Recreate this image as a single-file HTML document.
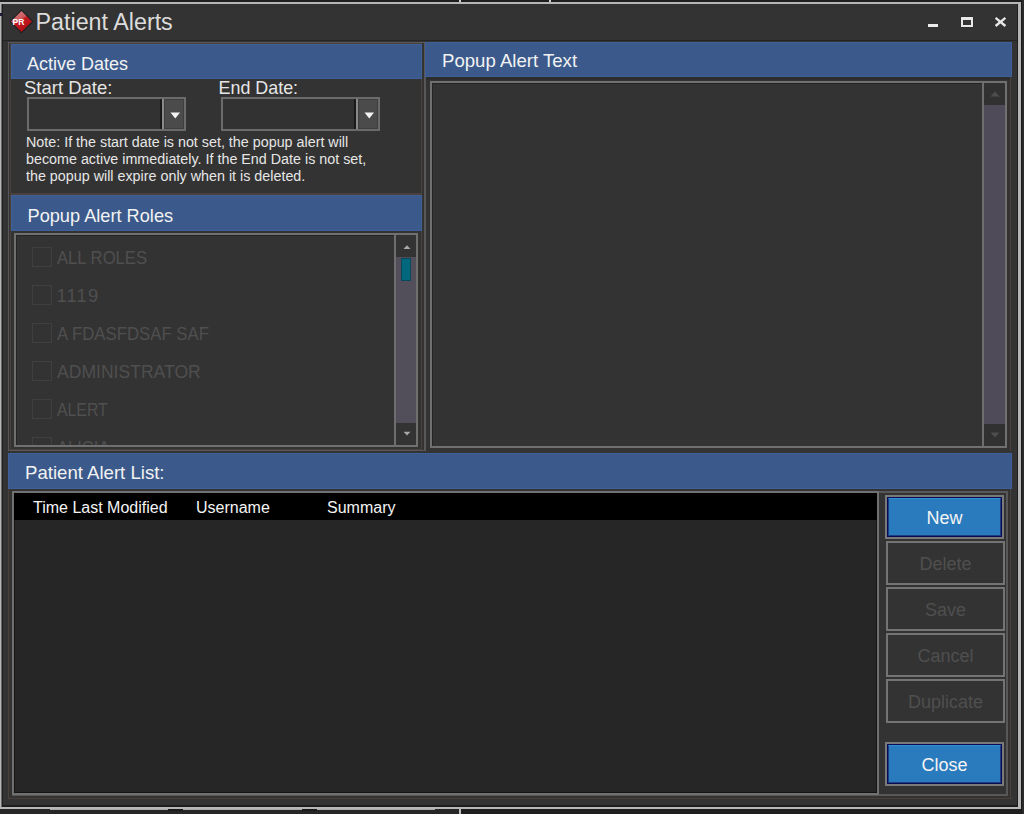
<!DOCTYPE html>
<html><head><meta charset="utf-8">
<style>
*{margin:0;padding:0;box-sizing:border-box}
html,body{width:1024px;height:814px;overflow:hidden;background:#262626;font-family:"Liberation Sans",sans-serif}
.a{position:absolute}
.t{position:absolute;white-space:nowrap;line-height:1}
.band{position:absolute;background:#3b5a8b;box-shadow:inset 0 0 0 1px #3f5f98}
.gl{position:absolute;background:#585858}
.br{position:absolute;background:#4a403c}
.lb{position:absolute;border:2px solid #707070;box-shadow:inset 1px 1px 0 0 #242424}
.btn{position:absolute;border:2px solid #747474;background:#333}
.btn .t{color:#4f4f4f;font-size:18px}
.bb{position:absolute;border:2px solid #7a7a7a;background:#0b0b55}
.bb .in{position:absolute;left:1px;top:1px;right:1px;bottom:1px;background:#2a7bbd;border:1px solid #1a3f80;border-top-color:#2f8fd0}
.bb .t{color:#f4f4f4;font-size:18px}
</style></head><body>
<!-- background details -->
<div class="a" style="left:0;top:0;width:1024px;height:2px;background:#1f1f1f"></div>
<div class="a" style="left:459px;top:0;width:1.5px;height:3px;background:#cfcfcf"></div>
<div class="a" style="left:549px;top:0;width:1.5px;height:3px;background:#cfcfcf"></div>
<div class="a" style="left:1020.5px;top:0;width:1.5px;height:814px;background:#1a1a1a"></div>
<div class="a" style="left:1022px;top:0;width:2px;height:814px;background:#2b2b2b"></div>
<div class="a" style="left:460px;top:809px;width:561px;height:5px;background:#1e1e1e"></div>
<div class="a" style="left:459px;top:808px;width:1.5px;height:6px;background:#bdbdbd"></div>
<!-- window -->
<div class="a" style="left:0;top:2px;width:1020.5px;height:807px;background:#b6b6b6"></div>
<div class="a" style="left:1px;top:4px;width:1px;height:803px;background:#6a6a6a"></div>
<div class="a" style="left:2px;top:4px;width:1016px;height:803px;background:#1e1e1e"></div>
<div class="a" style="left:3px;top:4px;width:1014px;height:801px;background:#333"></div>
<!-- title bar bottom line -->
<div class="a" style="left:3px;top:40px;width:1014px;height:1px;background:#242424"></div>

<!-- icon -->
<svg class="a" style="left:8px;top:8px" width="28" height="28" viewBox="0 0 28 28">
  <defs><linearGradient id="rg" x1="0.2" y1="0" x2="0.8" y2="1"><stop offset="0" stop-color="#d98080"/><stop offset="0.38" stop-color="#cc5a5e"/><stop offset="0.46" stop-color="#c2181e"/><stop offset="1" stop-color="#a80c14"/></linearGradient></defs>
  <path d="M13.5 1.5 L25.5 13.5 L13.5 25.5 L1.5 13.5 Z" fill="#1f1f1f"/>
  <path d="M13.5 3 L24 13.5 L13.5 24 L3 13.5 Z" fill="url(#rg)"/>
  <text x="10.5" y="17" font-family="Liberation Sans" font-weight="bold" font-size="8.5" fill="#fff" text-anchor="middle">PR</text>
</svg>
<div class="t" style="left:35.5px;top:11px;font-size:23.3px;color:#dcdcdc">Patient Alerts</div>

<!-- controls -->
<div class="a" style="left:928px;top:24px;width:10px;height:3px;background:#ececec"></div>
<div class="a" style="left:960.5px;top:17px;width:12.5px;height:10px;border:2px solid #e8e8e8;border-top-width:3.5px;box-shadow:0 0 1px #151515"></div>
<svg class="a" style="left:993px;top:16px" width="14" height="12" viewBox="0 0 14 12"><path d="M2.6 1.8 L12.4 10 M12.4 1.8 L2.6 10" stroke="#e8e8e8" stroke-width="2.3"/></svg>

<!-- LEFT COLUMN -->
<div class="gl" style="left:8px;top:42px;width:418px;height:409px"></div>
<div class="a" style="left:9px;top:43px;width:415px;height:407px;background:#333"></div>
<!-- Active Dates group -->
<div class="br" style="left:10px;top:43px;width:412px;height:151px"></div>
<div class="a" style="left:11px;top:44px;width:410px;height:149px;background:#333"></div>
<div class="band" style="left:11px;top:44px;width:411px;height:35px"></div>
<div class="t" style="left:27px;top:54.5px;font-size:18px;color:#f2f2f2">Active Dates</div>
<div class="t" style="left:24px;top:79px;font-size:18.5px;color:#e6e6e6">Start Date:</div>
<div class="t" style="left:218.5px;top:79.5px;font-size:17.9px;color:#e6e6e6">End Date:</div>
<!-- combo 1 -->
<div class="a" style="left:27px;top:97px;width:159px;height:34px;background:#6b6b6b"></div>
<div class="a" style="left:29px;top:99px;width:132px;height:30px;background:#323232"></div>
<div class="a" style="left:160px;top:99px;width:1.5px;height:30px;background:#1a1a1a"></div>
<div class="a" style="left:161.5px;top:99px;width:2px;height:30px;background:#8a8a8a"></div>
<div class="a" style="left:163.5px;top:99px;width:20.5px;height:30px;background:#4b4b4b;border:1px solid #3e3e3e"></div>
<svg class="a" style="left:169.5px;top:111.5px" width="11" height="7"><path d="M0.5 0.5 L10 0.5 L5.25 6.5 Z" fill="#f4f4f4"/></svg>
<!-- combo 2 -->
<div class="a" style="left:221px;top:97px;width:159px;height:34px;background:#6b6b6b"></div>
<div class="a" style="left:223px;top:99px;width:132px;height:30px;background:#323232"></div>
<div class="a" style="left:354px;top:99px;width:1.5px;height:30px;background:#1a1a1a"></div>
<div class="a" style="left:355.5px;top:99px;width:2px;height:30px;background:#8a8a8a"></div>
<div class="a" style="left:357.5px;top:99px;width:20.5px;height:30px;background:#4b4b4b;border:1px solid #3e3e3e"></div>
<svg class="a" style="left:363.5px;top:111.5px" width="11" height="7"><path d="M0.5 0.5 L10 0.5 L5.25 6.5 Z" fill="#f4f4f4"/></svg>
<div class="t" style="left:26px;top:132.5px;font-size:15.4px;line-height:17.1px;color:#e6e6e6;transform:scaleX(0.93);transform-origin:0 0">Note: If the start date is not set, the popup alert will<br>become active immediately. If the End Date is not set,<br>the popup will expire only when it is deleted.</div>

<!-- Popup Alert Roles group -->
<div class="br" style="left:10px;top:194px;width:412px;height:256px"></div>
<div class="a" style="left:11px;top:195px;width:410px;height:254px;background:#333"></div>
<div class="band" style="left:11px;top:195px;width:411px;height:36px"></div>
<div class="t" style="left:27.5px;top:206.5px;font-size:18.2px;color:#f2f2f2">Popup Alert Roles</div>
<div class="lb" style="left:14px;top:233px;width:404px;height:214px;background:#333"></div>
<div class="a" style="left:16px;top:235px;width:378px;height:210px;overflow:hidden"><div class="a" style="left:16px;top:12px;width:20px;height:20px;border:1px solid #3f3f3f"></div><div class="t" style="left:40.5px;top:14px;font-size:18.4px;color:#4f4f4f;transform-origin:0 0;transform:scaleX(0.905)">ALL ROLES</div><div class="a" style="left:16px;top:50px;width:20px;height:20px;border:1px solid #3f3f3f"></div><div class="t" style="left:40.5px;top:52px;font-size:18.4px;color:#4f4f4f;transform-origin:0 0;letter-spacing:1.2px">1119</div><div class="a" style="left:16px;top:88px;width:20px;height:20px;border:1px solid #3f3f3f"></div><div class="t" style="left:40.5px;top:90px;font-size:18.4px;color:#4f4f4f;transform-origin:0 0;transform:scaleX(0.912)">A FDASFDSAF SAF</div><div class="a" style="left:16px;top:126px;width:20px;height:20px;border:1px solid #3f3f3f"></div><div class="t" style="left:40.5px;top:128px;font-size:18.4px;color:#4f4f4f;transform-origin:0 0;transform:scaleX(0.955)">ADMINISTRATOR</div><div class="a" style="left:16px;top:164px;width:20px;height:20px;border:1px solid #3f3f3f"></div><div class="t" style="left:40.5px;top:166px;font-size:18.4px;color:#4f4f4f;transform-origin:0 0;transform:scaleX(0.86)">ALERT</div><div class="a" style="left:16px;top:202px;width:20px;height:20px;border:1px solid #3f3f3f"></div><div class="t" style="left:40.5px;top:204px;font-size:18.4px;color:#4f4f4f;transform-origin:0 0;transform:scaleX(0.9)">ALICIA</div></div><div class="a" style="left:394px;top:235px;width:2px;height:210px;background:#6e6e6e"></div><div class="a" style="left:396px;top:235px;width:20px;height:22px;background:#333"></div><svg class="a" style="left:401.5px;top:244px" width="10" height="6"><path d="M1.5 5 L8.5 5 L5 1.2 Z" fill="#a8a8a8"/></svg><div class="a" style="left:396px;top:257px;width:20px;height:166px;background:#524e5a"></div><div class="a" style="left:401px;top:257.5px;width:10px;height:23px;background:#00677d;border:1px solid #08485a"></div><div class="a" style="left:396px;top:423px;width:20px;height:22px;background:#333"></div><svg class="a" style="left:401.5px;top:431px" width="10" height="6"><path d="M1.5 0.8 L8.5 0.8 L5 4.6 Z" fill="#a8a8a8"/></svg>

<!-- RIGHT PANEL -->
<div class="gl" style="left:423.5px;top:42px;width:2.5px;height:409px"></div>
<div class="band" style="left:425px;top:42px;width:587px;height:35px"></div>
<div class="t" style="left:442px;top:52px;font-size:18.6px;color:#f2f2f2">Popup Alert Text</div>
<div class="a" style="left:426px;top:77px;width:584px;height:3px;background:#2d2d2d"></div>
<div class="br" style="left:1010px;top:77px;width:1px;height:374px"></div>
<div class="lb" style="left:430px;top:81px;width:577px;height:367px;background:#333"></div>

<div class="a" style="left:982px;top:83px;width:2px;height:363px;background:#6e6e6e"></div><div class="a" style="left:984px;top:83px;width:21px;height:22px;background:#313131"></div><svg class="a" style="left:990px;top:91px" width="10" height="6"><path d="M0.5 5.5 L9.5 5.5 L5 0.5 Z" fill="#4e4e4e"/></svg><div class="a" style="left:984px;top:105px;width:21px;height:319px;background:#4f4b58"></div><div class="a" style="left:984px;top:424px;width:21px;height:22px;background:#313131"></div><svg class="a" style="left:990px;top:432px" width="10" height="6"><path d="M0.5 0.5 L9.5 0.5 L5 5.5 Z" fill="#4e4e4e"/></svg>
<!-- BOTTOM PANEL -->
<div class="band" style="left:8px;top:453px;width:1004px;height:36px"></div>
<div class="t" style="left:25px;top:464px;font-size:18.6px;color:#f2f2f2">Patient Alert List:</div>
<div class="br" style="left:8px;top:798px;width:1004px;height:1px"></div>
<div class="br" style="left:1010px;top:489px;width:1px;height:310px"></div>
<div class="gl" style="left:1006px;top:491px;width:2px;height:305px"></div>
<div class="gl" style="left:12px;top:794px;width:996px;height:1.5px"></div>
<div class="br" style="left:8px;top:489px;width:1px;height:310px"></div>
<div class="gl" style="left:879px;top:491px;width:129px;height:1.5px"></div>
<div class="lb" style="left:12px;top:491px;width:867px;height:304px;background:#262626;box-shadow:inset 0 0 0 1px #141414"></div>
<div class="a" style="left:14px;top:493px;width:863px;height:27px;background:#000"></div>
<div class="t" style="left:33px;top:500px;font-size:16px;color:#f4f4f4">Time Last Modified</div>
<div class="t" style="left:196px;top:500px;font-size:16px;color:#f4f4f4">Username</div>
<div class="t" style="left:327px;top:500px;font-size:16px;color:#f4f4f4">Summary</div>

<div class="bb" style="left:885px;top:495px;width:119px;height:44px"><div class="in"></div><div class="t" style="left:0;width:115px;text-align:center;top:12px">New</div></div>
<div class="btn" style="left:886px;top:541px;width:119px;height:44px"><div class="t" style="left:0;width:115px;text-align:center;top:12px">Delete</div></div>
<div class="btn" style="left:886px;top:587px;width:119px;height:44px"><div class="t" style="left:0;width:115px;text-align:center;top:12px">Save</div></div>
<div class="btn" style="left:886px;top:633px;width:119px;height:44px"><div class="t" style="left:0;width:115px;text-align:center;top:12px">Cancel</div></div>
<div class="btn" style="left:886px;top:679px;width:119px;height:44px"><div class="t" style="left:0;width:115px;text-align:center;top:12px">Duplicate</div></div>
<div class="bb" style="left:885px;top:742px;width:119px;height:44px"><div class="in"></div><div class="t" style="left:0;width:115px;text-align:center;top:12px">Close</div></div>
<div class="a" style="left:50px;top:809px;width:118px;height:1px;background:#a8a8a8"></div>
<div class="a" style="left:183px;top:809px;width:119px;height:1px;background:#a8a8a8"></div>
<div class="a" style="left:317px;top:809px;width:118px;height:1px;background:#a8a8a8"></div>
<div class="a" style="left:168px;top:809px;width:15px;height:1.5px;background:#1a1a1a"></div>
<div class="a" style="left:302px;top:809px;width:15px;height:1.5px;background:#1a1a1a"></div>
<div class="a" style="left:0;top:13px;width:1.5px;height:2.5px;background:#1c1c3a"></div>
</body></html>
